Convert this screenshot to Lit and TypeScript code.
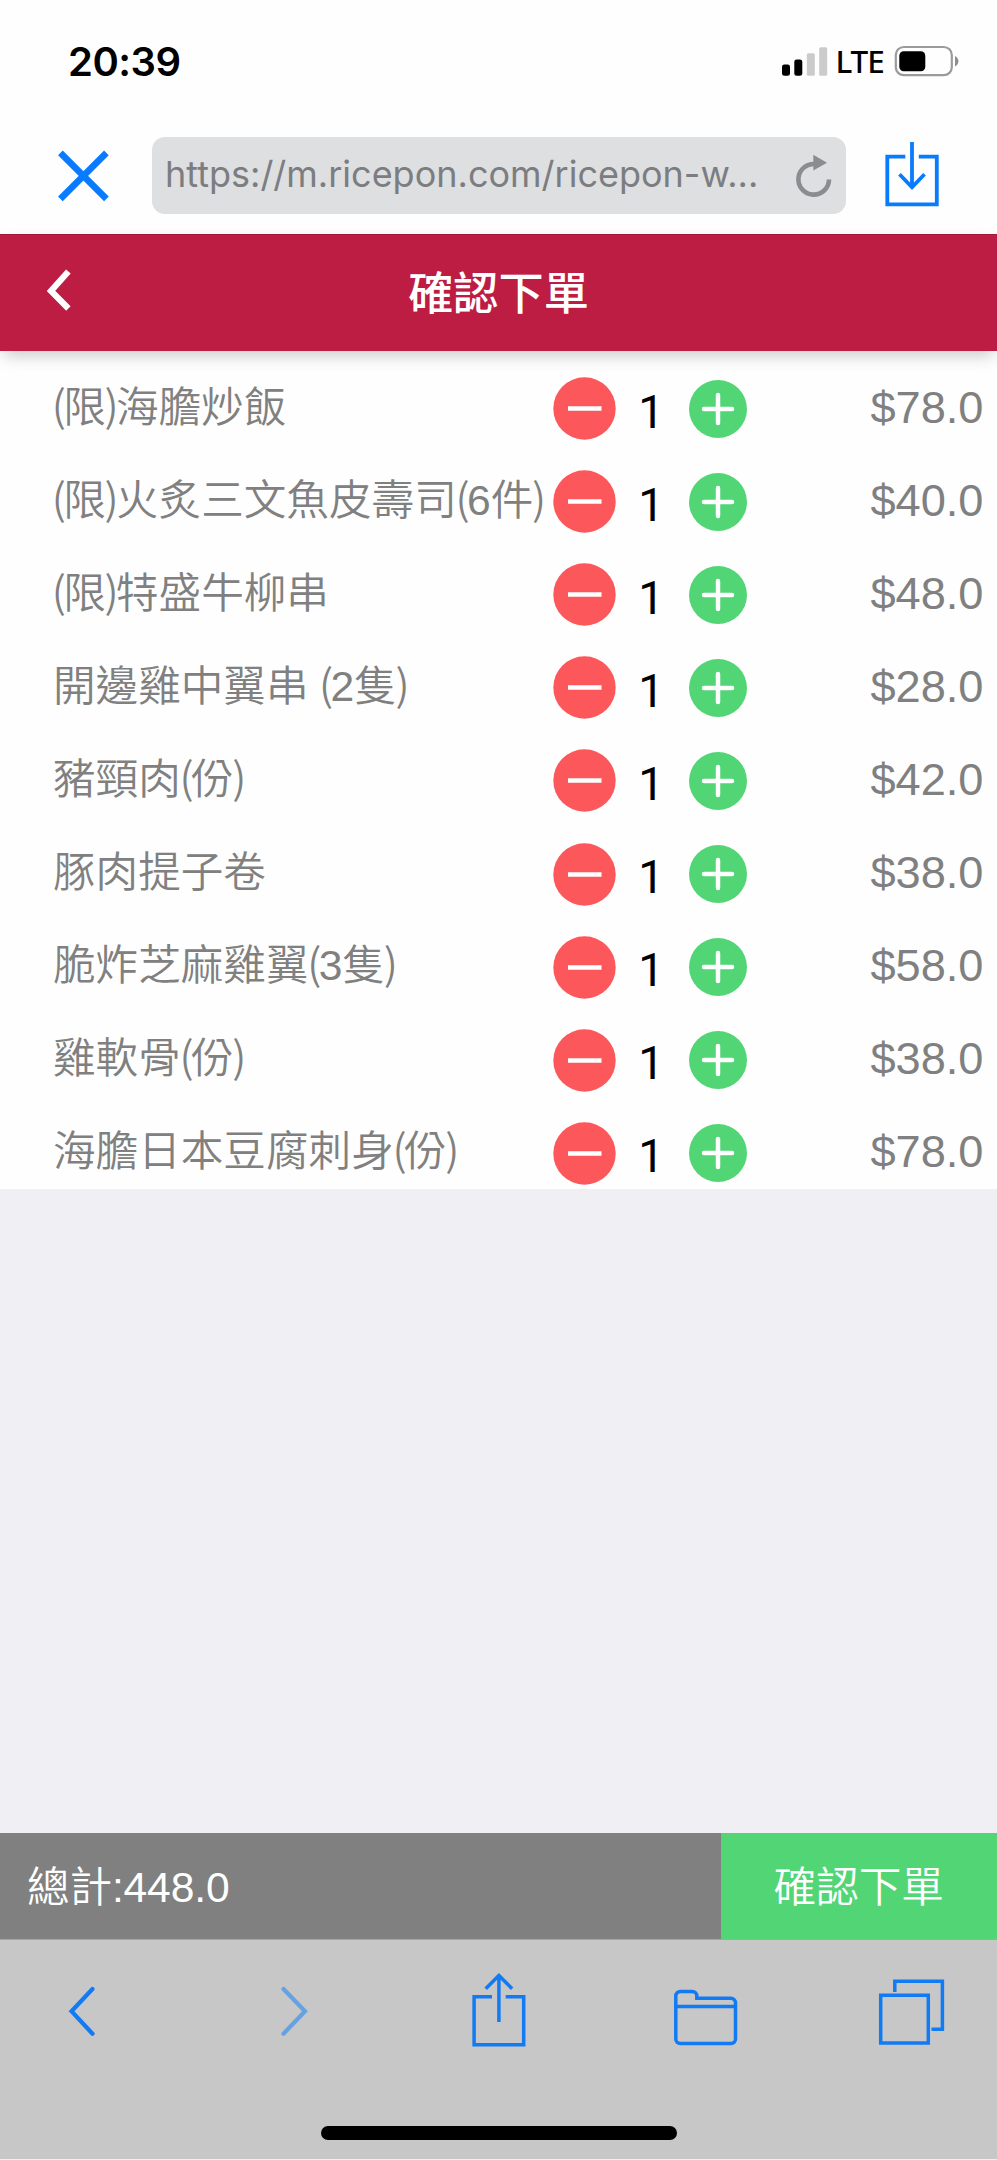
import { LitElement, html, css, svg } from "lit";
import { customElement, property, state } from "lit/decorators.js";

interface Item {
  name: string;
  qty: number;
  price: number;
}

@customElement("status-bar")
class StatusBar extends LitElement {
  static styles = css`
    :host { display: flex; height: 137px; box-sizing: border-box; padding: 40px 36px 0 68px; align-items: flex-start; color: #000; }
    .time { flex: 1; font: 600 40px/40px Inter, sans-serif; letter-spacing: -0.5px; margin-top: 2px; }
    .net { font: 500 31.5px/40px "Noto Sans", sans-serif; letter-spacing: -1.1px; width: 57.5px; margin-top: 1px; }
    .signal { width: 55px; height: 40px; }
    .battery { width: 68px; height: 40px; }
  `;
  render() {
    return html`
      <span class="time">20:39</span>
      <svg class="signal" viewBox="0 0 55 40">
        <rect x="1" y="24.4" width="8" height="11.4" rx="2.4" />
        <rect x="13.3" y="19.4" width="8" height="16.4" rx="2.4" />
        <rect x="25.8" y="13.2" width="8" height="22.6" rx="1.6" fill="#cbcbcb" />
        <rect x="38.2" y="7.2" width="8" height="28.6" rx="1.6" fill="#cbcbcb" />
      </svg>
      <span class="net">LTE</span>
      <svg class="battery" viewBox="0 0 68 40">
        <rect x="2.8" y="7" width="56" height="28.2" rx="8" fill="none" stroke="#9b9b9b" stroke-width="2.2" />
        <rect x="6.3" y="11.2" width="26" height="20" rx="4.5" />
        <path d="M62 16q3.4 2 3.4 5.2t-3.4 5.4z" fill="#8e8e8e" />
      </svg>
    `;
  }
}

@customElement("address-bar")
class AddressBar extends LitElement {
  @property() url = "";
  static styles = css`
    :host { display: flex; height: 97px; align-items: flex-start; }
    svg { display: block; flex: none; fill: none; stroke: #087bfe; }
    .close { width: 56px; height: 77px; margin: 0 40.5px 0 55px; stroke-width: 6.6; }
    .field { display: flex; align-items: center; box-sizing: border-box; width: 694px; height: 77px; border-radius: 13px; background: #dedfe1; padding: 0 14px 2px 13.5px; justify-content: space-between; }
    .url { font: 400 36px/75px Inter, sans-serif; color: #7c7d80; letter-spacing: 0; white-space: nowrap; }
    .reload { width: 40px; height: 50px; stroke: #8b8c8f; stroke-width: 4.6; }
    .save { width: 60px; height: 77px; margin-left: 36px; stroke-width: 3.8; }
  `;
  render() {
    return html`
      <svg class="close" viewBox="0 0 56 77"><path d="M5.4 15.8l46 46M51.4 15.8l-46 46" /></svg>
      <div class="field">
        <span class="url">${this.url}</span>
        <svg class="reload" viewBox="0 0 40 50">
          <path d="M24 14.2A15.3 15.3 0 1 0 37 29.4" />
          <path d="M21.3 4.8L35 12.8 21.3 20.6z" fill="#8b8c8f" stroke="none" />
        </svg>
      </div>
      <svg class="save" viewBox="0 0 60 77">
        <path d="M23.3 19.7H5.3v47.6h49.5V19.7h-18M30 5v45.5M17.5 37.3L30 50.3l12.5-13" />
      </svg>
    `;
  }
}

@customElement("order-row")
class OrderRow extends LitElement {
  @property({ attribute: false }) item!: Item;
  static styles = css`
    :host { display: grid; grid-template-columns: 553px 63px 72px 58px 1fr; height: 93.1px; box-sizing: border-box; padding: 22px 13.5px 0 0; align-items: center; color: #808080; }
    .name { padding-left: 53px; font: 350 42.6px/60px "Liberation Sans", "Noto Sans CJK TC", sans-serif; white-space: nowrap; margin-top: -4px; }
    .paren { font-family: "Noto Sans CJK TC", sans-serif; letter-spacing: -2.6px; margin-left: -1.3px; line-height: 0; }
    .qty { text-align: center; font: 400 46px/60px Roboto, sans-serif; color: #000; padding: 6px 1.5px 0 0; }
    .price { text-align: right; font: 400 45.2px/60px "Liberation Sans", sans-serif; margin-top: -2px; }
    svg { display: block; stroke: #fff; fill: none; }
    .minus { width: 63px; height: 63px; }
    .plus { width: 58px; height: 58px; margin-left: 0.5px; }
  `;
  render() {
    const { name, qty, price } = this.item;
    return html`
      <span class="name">${name.split(/([()])/).map((part) => (part === "(" || part === ")" ? html`<span class="paren">${part}</span>` : part))}</span>
      <svg class="minus" viewBox="0 0 63 63"><circle cx="31.5" cy="31.5" r="31.2" fill="#fc575a" stroke="none" /><path d="M15 31.5h33.5" stroke-width="4.6" /></svg>
      <span class="qty">${qty}</span>
      <svg class="plus" viewBox="0 0 58 58"><circle cx="29" cy="29" r="29" fill="#52d575" stroke="none" /><path d="M15 29h28M29 15v28" stroke-width="4.5" stroke-linecap="round" /></svg>
      <span class="price">$${price.toFixed(1)}</span>
    `;
  }
}

@customElement("browser-toolbar")
class BrowserToolbar extends LitElement {
  static styles = css`
    :host { display: flex; flex-direction: column; align-items: center; height: 221px; box-sizing: border-box; background: #c7c7c7; border-top: 1px solid #a6a6a6; border-bottom: 1px solid #f0f0f0; padding: 23.5px 39px 0 38px; }
    .icons { display: flex; justify-content: space-between; align-self: stretch; }
    svg { display: block; width: 88px; height: 90px; fill: none; stroke: #127bf3; stroke-width: 3.5; }
    .disabled { stroke: #66a2e2; }
    .nav { stroke-width: 4.2; stroke-linecap: round; }
    .home { width: 356px; height: 14px; border-radius: 7px; background: #000; margin: 72px 0 0 1px; }
  `;
  render() {
    const icons = [
      { cls: "nav", d: "M54.5 25L33.5 47.3 54.5 69.8" },
      { cls: "nav disabled", d: "M37.5 25L59 47.3 37.5 69.8" },
      { cls: "", d: "M38 32.7H20.1v48H69.7v-48h-18M44.9 58V12M31.7 24.7L44.9 11.4 58.1 24.7" },
      { cls: "", d: "M13.8 75V32a4.5 4.5 0 0 1 4.5-4.5h12a4.5 4.5 0 0 1 4.5 4.5v2.3H69a4.5 4.5 0 0 1 4.5 4.5V75a4.5 4.5 0 0 1-4.5 4.5H18.3a4.5 4.5 0 0 1-4.5-4.5zM13.8 42.4h59.7" },
      { cls: "", d: "M10.7 31.3h47.6v47.6H10.7zM24.8 28V17.2h47.6v48H61.5" },
    ];
    return html`
      <div class="icons">
        ${icons.map((i) => html`<svg class=${i.cls} viewBox="0 0 88 90">${svg`<path d=${i.d} />`}</svg>`)}
      </div>
      <div class="home"></div>
    `;
  }
}

@customElement("app-root")
class AppRoot extends LitElement {
  @state() private items: Item[] = [
    { name: "(限)海膽炒飯", qty: 1, price: 78 },
    { name: "(限)火炙三文魚皮壽司(6件)", qty: 1, price: 40 },
    { name: "(限)特盛牛柳串", qty: 1, price: 48 },
    { name: "開邊雞中翼串 (2隻)", qty: 1, price: 28 },
    { name: "豬頸肉(份)", qty: 1, price: 42 },
    { name: "豚肉提子卷", qty: 1, price: 38 },
    { name: "脆炸芝麻雞翼(3隻)", qty: 1, price: 58 },
    { name: "雞軟骨(份)", qty: 1, price: 38 },
    { name: "海膽日本豆腐刺身(份)", qty: 1, price: 78 },
  ];
  static styles = css`
    :host { display: flex; flex-direction: column; width: 997px; height: 2160px; overflow: hidden; background: #fefefe; font-family: "Liberation Sans", "Noto Sans CJK TC", sans-serif; }
    .header { display: grid; grid-template-columns: 120px 1fr 120px; align-items: center; height: 117px; box-sizing: border-box; border-top: 1px solid #a11a3b; background: #bd1d42; color: #fff; box-shadow: 0 8px 16px -4px rgba(0, 0, 0, 0.22); z-index: 1; }
    .back { display: block; width: 40px; height: 50px; margin: -8px 0 0 39.5px; fill: none; stroke: #fff; stroke-width: 6.2; }
    .title { text-align: center; font: 500 45.2px/60px "Noto Sans CJK TC", sans-serif; margin-top: -5px; }
    .list { background: #fefefe; height: 838px; }
    .space { flex: 1; background: #efeff4; }
    .summary { display: flex; height: 106px; color: #fff; font-size: 42.6px; font-weight: 350; line-height: 108px; }
    .total { width: 720.5px; box-sizing: border-box; padding-left: 27px; background: #808080; letter-spacing: -0.15px; }
    .confirm { flex: 1; text-align: center; background: #52d575; }
  `;
  render() {
    const total = this.items.reduce((sum, i) => sum + i.qty * i.price, 0);
    return html`
      <status-bar></status-bar>
      <address-bar url="https://m.ricepon.com/ricepon-w..."></address-bar>
      <div class="header">
        <svg class="back" viewBox="0 0 40 50"><path d="M28.4 7.5L11 27 28.4 44.5" /></svg>
        <span class="title">確認下單</span>
      </div>
      <div class="list">${this.items.map((item) => html`<order-row .item=${item}></order-row>`)}</div>
      <div class="space"></div>
      <div class="summary">
        <div class="total">總計:${total.toFixed(1)}</div>
        <div class="confirm">確認下單</div>
      </div>
      <browser-toolbar></browser-toolbar>
    `;
  }
}
